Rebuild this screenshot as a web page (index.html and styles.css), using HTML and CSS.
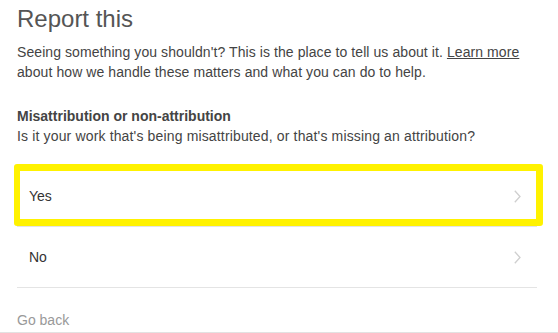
FILE: index.html
```html
<!DOCTYPE html>
<html lang="en">
<head>
<meta charset="utf-8">
<title>Report this</title>
<link rel="stylesheet" href="styles.css">
</head>
<body>
<div class="page">
  <div class="content">
    <h1 class="title">Report this</h1>
    <p class="intro">Seeing something you shouldn't? This is the place to tell us about it. <a class="link" href="#">Learn more</a> about how we handle these matters and what you can do to help.</p>
    <h2 class="section-title">Misattribution or non-attribution</h2>
    <p class="section-text">Is it your work that's being misattributed, or that's missing an attribution?</p>
    <ul class="options">
      <li class="option option--focus">
        <span class="option-label">Yes</span>
        <svg class="chevron" width="7" height="13" viewBox="0 0 7 13"><path d="M0.8 0.8 L6 6.5 L0.8 12.2" fill="none" stroke="#cfcfcf" stroke-width="1.3"/></svg>
      </li>
      <li class="option">
        <span class="option-label">No</span>
        <svg class="chevron" width="7" height="13" viewBox="0 0 7 13"><path d="M0.8 0.8 L6 6.5 L0.8 12.2" fill="none" stroke="#cfcfcf" stroke-width="1.3"/></svg>
      </li>
    </ul>
  </div>
  <div class="footer">
    <a class="back" href="#">Go back</a>
  </div>
</div>
</body>
</html>
```

FILE: styles.css
```css
html, body {
  margin: 0;
  padding: 0;
  background: #ffffff;
}

body {
  font-family: "Liberation Sans", Arial, Helvetica, sans-serif;
  font-size: 14px;
  line-height: 20px;
  color: #444444;
}

.page {
  display: flex;
  flex-direction: column;
}

.content {
  padding: 0 21px 0 17px;
}

.title {
  margin: 5px 0 0;
  font-size: 24px;
  line-height: 28px;
  font-weight: 400;
  color: #555555;
}

.intro {
  margin: 9px 0 0;
  letter-spacing: 0.08px;
}

.link {
  color: #444444;
  text-decoration: underline;
}

.section-title {
  margin: 24px 0 0;
  font-size: 14px;
  line-height: 20px;
  font-weight: 700;
  color: #444444;
}

.section-text {
  margin: 0;
  letter-spacing: 0.15px;
}

.options {
  list-style: none;
  margin: 20px 0 0;
  padding: 0;
}

.option {
  position: relative;
  box-sizing: border-box;
  height: 61px;
  display: flex;
  align-items: center;
  justify-content: space-between;
  padding: 0 16px 0 12px;
  border-bottom: 1px solid #e4e4e4;
  color: #333333;
}

.option--focus::after {
  content: "";
  position: absolute;
  left: -3px;
  right: -6px;
  top: -2px;
  bottom: 0;
  border: 7px solid #fff200;
  border-left-width: 6px;
  border-radius: 3px;
  pointer-events: none;
}

.chevron {
  display: block;
}

.footer {
  margin-top: 22px;
  padding: 0 17px 2px;
  border-bottom: 1px solid #e2e2e2;
}

.back {
  color: #999999;
  text-decoration: none;
}
```
